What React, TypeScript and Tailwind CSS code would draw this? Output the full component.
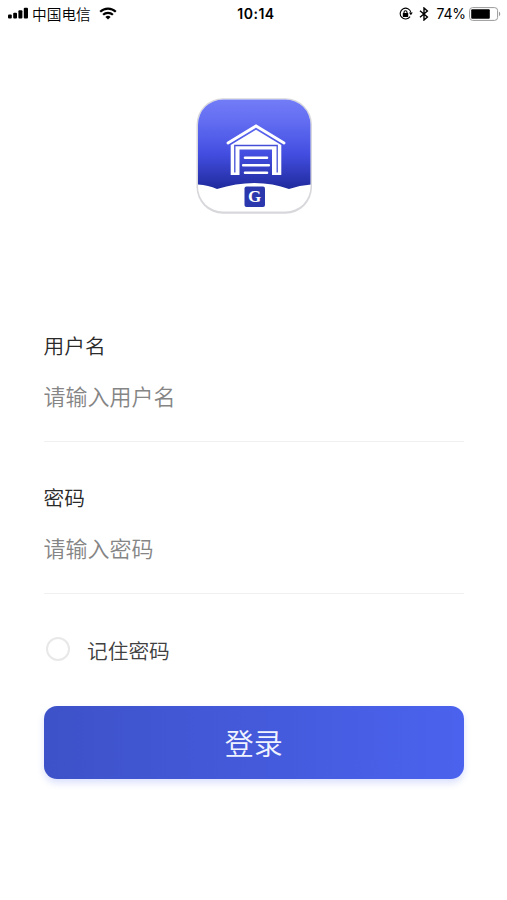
import { useState } from "react";

const CJK = "font-['Noto_Sans_CJK_SC',sans-serif]";

function StatusBar() {
  return (
    <div className="flex h-[27px] items-center pl-2 pr-1.5 text-black">
      <div className="flex flex-1 items-center">
        <svg width="20" height="12" viewBox="0 0 20 12" fill="currentColor">
          <rect x="0" y="7.5" width="3.8" height="4" rx="1" />
          <rect x="5.2" y="5.8" width="3.8" height="5.7" rx="1" />
          <rect x="10.4" y="3.2" width="4" height="8.3" rx="1" />
          <rect x="15.8" y="0.7" width="4.2" height="10.8" rx="1" />
        </svg>
        <span className="relative top-px ml-1 text-[14.7px] font-[350] leading-none">中国电信</span>
        <svg className="ml-2" width="18" height="13" viewBox="0 0 18 13" fill="none" stroke="currentColor" strokeWidth="2.2">
          <path d="M1.2 4.8a11 11 0 0 1 15.6 0" />
          <path d="M4.1 7.8a7 7 0 0 1 9.8 0" />
          <path d="M9 12.6 6.4 10a3.7 3.7 0 0 1 5.2 0z" fill="currentColor" stroke="none" />
        </svg>
      </div>
      <span className="ml-[3px] font-['Inter',sans-serif] text-[14px] font-semibold leading-none tracking-[0.5px]">10:14</span>
      <div className="flex flex-1 items-center justify-end">
        <svg width="14" height="14" viewBox="0 0 14 14" fill="none" stroke="currentColor" strokeWidth="1.1">
          <path d="M11.1 9.6A5.4 5.4 0 1 1 11.9 5.5" />
          <path d="M10 5.6h3.8l-1.9 2.6z" fill="currentColor" stroke="none" />
          <rect x="3.8" y="6" width="5.4" height="4" rx="0.5" fill="currentColor" stroke="none" />
          <path d="M5 6.4V5.3a1.5 1.5 0 0 1 3 0v1.1" />
        </svg>
        <svg className="ml-1.5" width="10" height="14" viewBox="0 0 10 14" fill="none" stroke="currentColor" strokeWidth="1.4">
          <path d="M1 3.8 8.4 10 5 13V1l3.4 3L1 10.2" />
        </svg>
        <span className="ml-[7px] font-['Inter',sans-serif] text-[14px] leading-none tracking-[-0.1px]">74%</span>
        <svg className="ml-[3px]" width="32" height="14" viewBox="0 0 32 14">
          <rect x="0.6" y="0.6" width="28" height="12.8" rx="3" fill="none" stroke="#999" strokeWidth="1" />
          <rect x="2.2" y="2.2" width="18.6" height="9.6" rx="1" fill="#000" />
          <path d="M30 4.8c1.6.6 1.6 3.8 0 4.4z" fill="#999" />
        </svg>
      </div>
    </div>
  );
}

function Logo() {
  return (
    <svg className="ml-[3px] size-[124px]" viewBox="8 9 124 124">
      <defs>
        <linearGradient id="sky" x1="0" y1="0" x2="0" y2="1">
          <stop offset="0" stopColor="#737df7" />
          <stop offset="0.25" stopColor="#626df2" />
          <stop offset="0.62" stopColor="#424de0" />
          <stop offset="1" stopColor="#1f2a9c" />
        </linearGradient>
        <clipPath id="tile">
          <rect x="13" y="14.5" width="112.5" height="112" rx="25" />
        </clipPath>
      </defs>
      <rect x="11.5" y="13.2" width="115.5" height="115.5" rx="26.5" fill="#d8d8dc" />
      <rect x="13" y="14.5" width="112.5" height="112" rx="25" fill="#fff" />
      <g clipPath="url(#tile)">
        <path d="M12 14H127V99.5Q115 100 104 104Q88 98 69.5 98Q51 98 32 104Q23 100 12 99.5z" fill="url(#sky)" />
      </g>
      {/* roof, gable, then the door frame */}
      <path d="M43 58 71 41 99 58" fill="none" stroke="#fff" strokeWidth="2.8" strokeLinecap="round" />
      <path d="M71 44.8 96.3 60V90H87V64.5H54.5V90H45.7V60z" fill="#fff" />
      <path d="M49.8 87.5V60.5H92.2V87.5" fill="none" stroke="#4450d8" strokeWidth="1.3" />
      <path d="M60 72.7H82M58.2 80.3H83.8M60 87.7H82" stroke="#fff" strokeWidth="2.6" strokeLinecap="round" />
      <rect x="59.5" y="101.5" width="20.5" height="20.5" rx="2" fill="#2b38ad" />
      <text x="69.7" y="117.3" textAnchor="middle" className="font-['Liberation_Serif',serif] text-[17px] font-bold" fill="#fff">G</text>
    </svg>
  );
}

function Field({ label, placeholder, type }: { label: string; placeholder: string; type: string }) {
  return (
    <label className="block h-[152px] pt-2">
      <span className="block text-[20.7px] leading-[30px] font-[350] text-[#2a2a2a]">{label}</span>
      <input
        type={type}
        placeholder={placeholder}
        className="mt-1 block h-[78px] w-full border-b border-[#f0f0f0] pb-4 text-[22px] font-[350] outline-none placeholder:text-[#858585]"
      />
    </label>
  );
}

export default function App() {
  const [remember, setRemember] = useState(false);

  return (
    <div className={`h-[900px] w-[507px] overflow-hidden bg-white ${CJK}`}>
      <StatusBar />
      <div className="mt-[67px] flex justify-center">
        <Logo />
      </div>
      <form className="ml-[43.5px] mr-[43px] mt-[104px]" onSubmit={(e) => e.preventDefault()}>
        <Field label="用户名" placeholder="请输入用户名" type="text" />
        <Field label="密码" placeholder="请输入密码" type="password" />
        <button type="button" className="mt-2.5 flex h-[30px] items-center" onClick={() => setRemember(!remember)}>
          <span className={`-mt-1 ml-[2.5px] size-[24px] rounded-full border-2 border-[#e8e8e8] ${remember ? "bg-[#4759e4]" : "bg-white"}`} />
          <span className="ml-[17px] text-[20.7px] font-[350] text-[#404040]">记住密码</span>
        </button>
        <button
          type="submit"
          className="mt-10 h-[73px] w-full rounded-[13px] bg-linear-to-r from-[#3d52c8] to-[#4b62ee] text-[29px] font-[350] text-[#f0f3ff] shadow-[0_4px_7px_rgba(75,98,238,0.2)]"
        >
          登录
        </button>
      </form>
    </div>
  );
}
